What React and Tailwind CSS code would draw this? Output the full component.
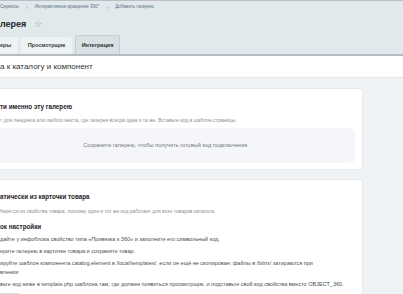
import React from 'react';

const crumbs = ['Сервисы', 'Интерактивное вращение 360°', 'Добавить галерею'];
const tabs = [
  { name: 'еры', w: 'w-[18px] justify-start', active: false },
  { name: 'Просмотрщик', w: 'w-[51px] justify-center', active: false },
  { name: 'Интеграция', w: 'w-[45px] justify-center', active: true },
];

const steps = [
  'дайте у инфоблока свойство типа «Привязка к 360» и заполните его символьный код.',
  'ерите галерею в карточке товара и сохраните товар.',
  null,
  'вьте код ниже в template.php шаблона там, где должен появиться просмотрщик, и подставьте свой код свойства вместо OBJECT_360.',
];

export default function App() {
  return (
    <div className="w-[403px] h-[294px] overflow-hidden bg-[#f0f3f5] font-['Liberation_Sans',Arial,sans-serif]">
      {/* header */}
      <div className="bg-[#e2e9ec] border-t border-[#b8c2c6] border-b-2 border-b-[#b4bec2]">
        <div className="h-[13px] flex items-center text-[4.5px] text-[#5b7387]">
          {crumbs.map((c, i) => (
            <React.Fragment key={c}>
              {i > 0 && <span className="mx-[7px] text-[#8b9aa4] text-[6px]">›</span>}
              <span>{c}</span>
            </React.Fragment>
          ))}
        </div>
        <div className="h-[21px] flex items-center">
          <h1 className="text-[9px] font-bold text-[#1f2326]">лерея</h1>
          <span className="ml-[8px] text-[9px] leading-none text-[#8d9ba4]">☆</span>
        </div>
        <div className="h-[19px] flex items-end gap-[3px]">
          {tabs.map((t) =>
            t.active ? (
              <div
                key={t.name}
                className={`${t.w} h-[19px] flex items-center bg-[#d9e1e4] border border-b-0 border-[#c5cfd3] rounded-t-[2px] text-[5.5px] font-bold text-[#2b3033]`}
              >
                {t.name}
              </div>
            ) : (
              <div
                key={t.name}
                className={`${t.w} h-[17px] flex items-center bg-[#eef2f3] rounded-tr-[2px] text-[5.5px] font-bold text-[#3a4044]`}
              >
                {t.name}
              </div>
            )
          )}
        </div>
      </div>

      {/* section heading */}
      <div className="h-[22px] bg-white border-b border-[#e2e7e9] flex items-center">
        <h2 className="text-[8px] text-[#2f3437]">а к каталогу и компонент</h2>
      </div>

      {/* content */}
      <div className="pr-[40px] pt-[10px]">
        <div className="bg-white border-y border-r border-[#e6eaec] rounded-r-[4px] pr-[7px] pt-[13px] pb-[6px]">
          <h3 className="text-[6.3px] leading-[10px] font-bold text-[#1f2326]">ти именно эту галерею</h3>
          <p className="mt-[4px] text-[5px] leading-[8px] text-[#8a9096]">
            т для лендинга или любого места, где галерея всегда одна и та же. Вставьте код в шаблон страницы.
          </p>
          <div className="mt-[4px] h-[35px] pr-[23px] bg-[#f5f6f9] rounded-r-[5px] flex items-center justify-center">
            <span className="text-[5.6px] text-[#70767c]">Сохраните галерею, чтобы получить готовый код подключения.</span>
          </div>
        </div>

        <div className="mt-[9px] bg-white border-y border-r border-[#e6eaec] rounded-r-[4px] pr-[7px] pt-[12px] pb-[10px]">
          <h3 className="text-[6.3px] leading-[10px] font-bold text-[#1f2326]">атически из карточки товара</h3>
          <p className="mt-[5px] text-[5px] leading-[8px] text-[#8a9096]">
            берётся из свойства товара, поэтому один и тот же код работает для всех товаров каталога.
          </p>
          <h4 className="mt-[7px] text-[6.3px] leading-[10px] font-bold text-[#1f2326]">ок настройки</h4>
          <div className="mt-[3px] text-[5.5px] leading-[9px] text-[#4a5055] flex flex-col gap-[3px]">
            {steps.map((s, i) =>
              s ? (
                <p key={i}>{s}</p>
              ) : (
                <p key={i}>
                  ируйте шаблон компонента catalog.element в /local/templates/, если он ещё не скопирован: файлы в /bitrix/ затираются при
                  <br />
                  влении
                </p>
              )
            )}
          </div>
          <div className="mt-[4px] h-[20px] w-[20px] border-y border-r border-[#d8dde0] rounded-r-[3px] bg-[#f7f8fa]" />
        </div>
      </div>
    </div>
  );
}
